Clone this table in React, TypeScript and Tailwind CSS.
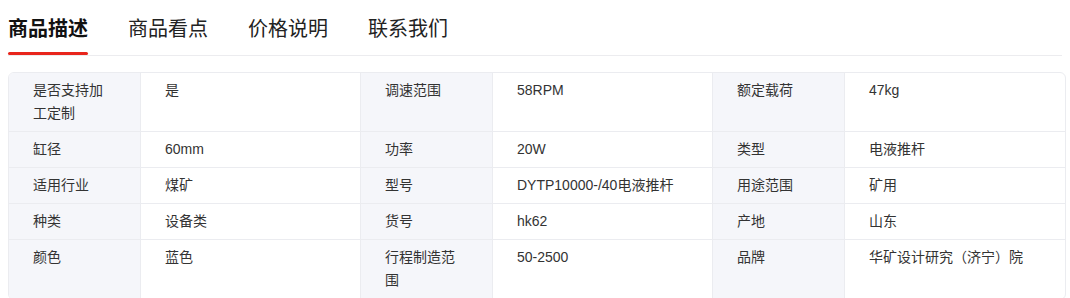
import React from 'react';

const tabs = ['商品描述', '商品看点', '价格说明', '联系我们'];

const rows: [string, string][][] = [
  [['是否支持加工定制', '是'], ['调速范围', '58RPM'], ['额定载荷', '47kg']],
  [['缸径', '60mm'], ['功率', '20W'], ['类型', '电液推杆']],
  [['适用行业', '煤矿'], ['型号', 'DYTP10000-/40电液推杆'], ['用途范围', '矿用']],
  [['种类', '设备类'], ['货号', 'hk62'], ['产地', '山东']],
  [['颜色', '蓝色'], ['行程制造范围', '50-2500'], ['品牌', '华矿设计研究（济宁）院']],
];

export default function App() {
  return (
    <div className="w-[1070px] h-[298px] overflow-hidden bg-white text-[#333] font-['Liberation_Sans','Noto_Sans_CJK_SC',sans-serif]">
      <div className="mx-2 flex gap-10 border-b border-[#ececef]">
        {tabs.map((t, i) => (
          <div key={t} className="flex flex-col w-20">
            <span className={`pt-[15px] text-[20px] leading-[28px] whitespace-nowrap ${i === 0 ? 'font-bold text-[#111]' : 'text-[#222]'}`}>
              {t}
            </span>
            <div className={`mt-[9px] h-[3px] rounded-full ${i === 0 ? 'bg-[#e8251c]' : 'bg-transparent'}`} />
          </div>
        ))}
      </div>

      <div className="ml-2 mt-4 w-[1058px] border border-[#ebecf0] rounded-[6px] overflow-hidden">
        {rows.map((row, ri) => (
          <div key={ri} className="grid grid-cols-[132px_220px_132px_220px_132px_1fr] border-b border-[#ebecf0]">
            {row.map(([label, value], ci) => (
              <React.Fragment key={ci}>
                <div className="bg-[#f5f6fa] border-r border-[#ebecf0] px-6 py-[6px] text-[14px] leading-[23px] break-all">
                  {label.length > 5 ? (
                    <>
                      {label.slice(0, 5)}
                      <br />
                      {label.slice(5)}
                    </>
                  ) : (
                    label
                  )}
                </div>
                <div className={`px-6 py-[6px] text-[14px] leading-[23px] ${ci < 2 ? 'border-r border-[#ebecf0]' : ''}`}>
                  {value}
                </div>
              </React.Fragment>
            ))}
          </div>
        ))}
      </div>
    </div>
  );
}
